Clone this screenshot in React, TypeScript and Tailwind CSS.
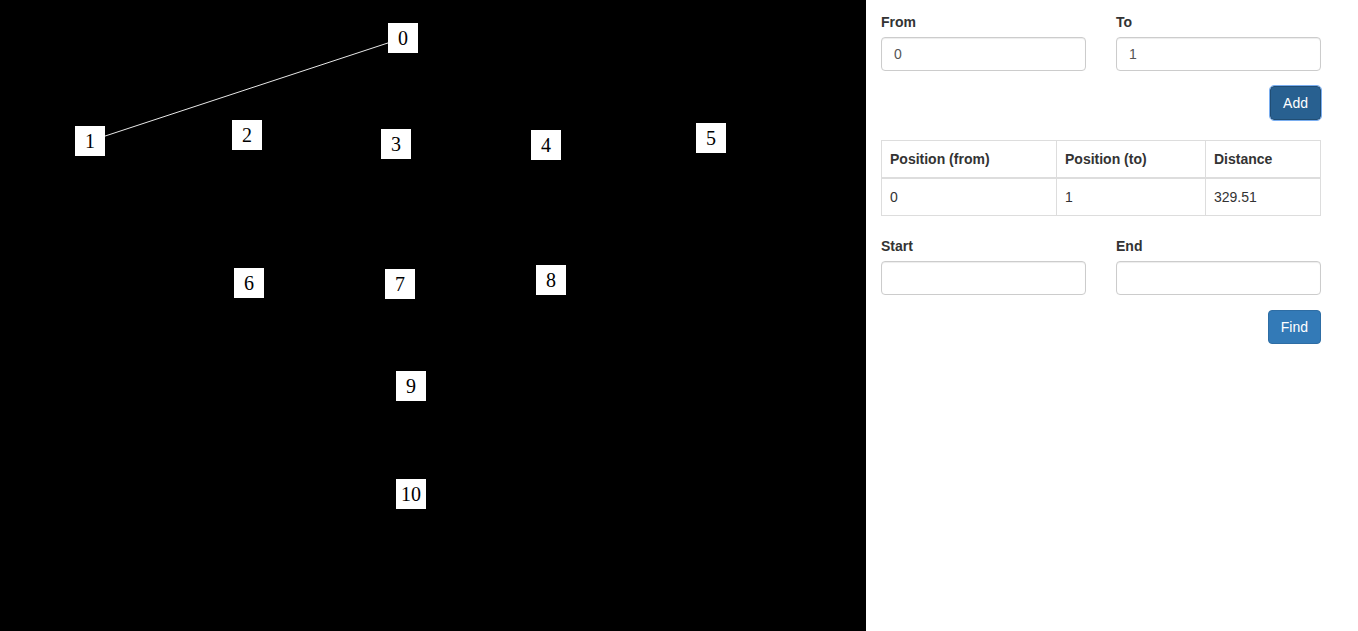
import { useState } from 'react';

type Node = { id: number; x: number; y: number };

// node centres on the canvas
const nodes: Node[] = [
  { id: 0, x: 403, y: 38 },
  { id: 1, x: 90, y: 141 },
  { id: 2, x: 247, y: 135 },
  { id: 3, x: 396, y: 144 },
  { id: 4, x: 546, y: 145 },
  { id: 5, x: 711, y: 138 },
  { id: 6, x: 249, y: 283 },
  { id: 7, x: 400, y: 284 },
  { id: 8, x: 551, y: 280 },
  { id: 9, x: 411, y: 386 },
  { id: 10, x: 411, y: 494 },
];

const edges: [number, number][] = [[0, 1]];

const sans = { fontFamily: '"Liberation Sans", Arial, Helvetica, sans-serif' };

function Field({ label, value }: { label: string; value: string }) {
  return (
    <div className="mb-[15px]">
      <label className="block text-[14px] leading-5 font-bold text-[#333] mb-[5px]">{label}</label>
      <input
        readOnly
        value={value}
        className="block w-full h-[34px] px-3 py-[6px] text-[14px] text-[#555] bg-white border border-[#ccc] rounded-[4px] shadow-[inset_0_1px_1px_rgba(0,0,0,0.075)] outline-none"
        style={sans}
      />
    </div>
  );
}

export default function App() {
  const [from] = useState('0');
  const [to] = useState('1');

  const dist = (a: Node, b: Node) => Math.hypot(a.x - b.x, a.y - b.y).toFixed(2);

  return (
    <div className="flex h-[631px] w-full overflow-hidden" style={sans}>
      <div className="relative w-[866px] h-full bg-black shrink-0">
        <svg className="absolute inset-0" width="866" height="631">
          {edges.map(([a, b]) => (
            <line
              key={`${a}-${b}`}
              x1={nodes[a].x}
              y1={nodes[a].y}
              x2={nodes[b].x}
              y2={nodes[b].y}
              stroke="#e8e8e8"
              strokeWidth="1"
            />
          ))}
        </svg>
        {nodes.map((n) => (
          <div
            key={n.id}
            className="absolute w-[30px] h-[30px] bg-white flex items-center justify-center text-[20px] text-black"
            style={{ left: n.x - 15, top: n.y - 15, fontFamily: '"Liberation Serif", "DejaVu Serif", serif' }}
          >
            {n.id}
          </div>
        ))}
      </div>

      <div className="flex-1 bg-white pt-3 pl-[15px]">
        <div className="w-[440px]">
          <div className="grid grid-cols-2 gap-x-[30px]">
            <Field label="From" value={from} />
            <Field label="To" value={to} />
          </div>
          <div className="flex justify-end mb-5">
            <button className="h-[34px] px-3 text-[14px] text-white bg-[#286090] border border-[#204d74] rounded-[4px] outline outline-1 outline-offset-0 outline-[#7aaef0]">
              Add
            </button>
          </div>

          <table className="w-full border-collapse border border-[#ddd] text-[14px] text-[#333] mb-5">
            <thead>
              <tr>
                <th className="text-left font-bold p-2 leading-5 border border-[#ddd] border-b-2 w-[175px]">Position (from)</th>
                <th className="text-left font-bold p-2 leading-5 border border-[#ddd] border-b-2 w-[149px]">Position (to)</th>
                <th className="text-left font-bold p-2 leading-5 border border-[#ddd] border-b-2">Distance</th>
              </tr>
            </thead>
            <tbody>
              {edges.map(([a, b]) => (
                <tr key={`${a}-${b}`}>
                  <td className="p-2 leading-5 border border-[#ddd]">{a}</td>
                  <td className="p-2 leading-5 border border-[#ddd]">{b}</td>
                  <td className="p-2 leading-5 border border-[#ddd]">{dist(nodes[a], nodes[b])}</td>
                </tr>
              ))}
            </tbody>
          </table>

          <div className="grid grid-cols-2 gap-x-[30px]">
            <Field label="Start" value="" />
            <Field label="End" value="" />
          </div>
          <div className="flex justify-end">
            <button className="h-[34px] px-3 text-[14px] text-white bg-[#337ab7] border border-[#2e6da4] rounded-[4px]">
              Find
            </button>
          </div>
        </div>
      </div>
    </div>
  );
}
